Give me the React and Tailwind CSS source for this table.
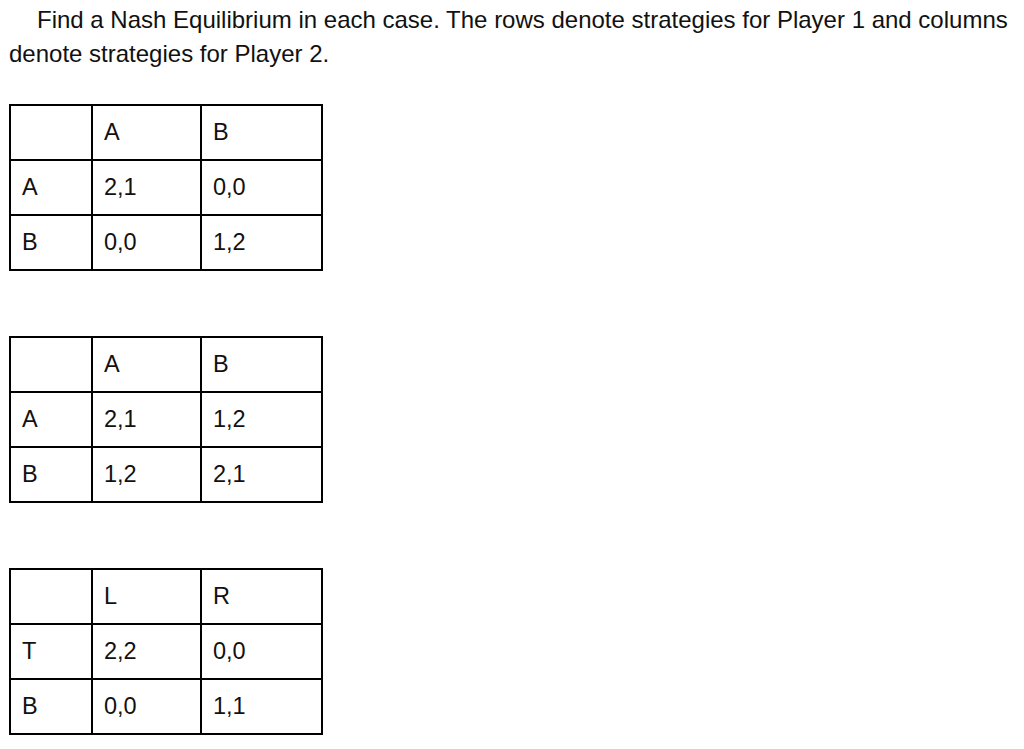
import React from 'react';

const games = [
  { cols: ['A', 'B'], rows: [['A', '2,1', '0,0'], ['B', '0,0', '1,2']] },
  { cols: ['A', 'B'], rows: [['A', '2,1', '1,2'], ['B', '1,2', '2,1']] },
  { cols: ['L', 'R'], rows: [['T', '2,2', '0,0'], ['B', '0,0', '1,1']] },
];

const Cell = ({ children, w }) => (
  <td className={`${w} border-2 border-black px-[11px] align-middle`}>{children}</td>
);

const GameTable = ({ game }) => (
  <table className="border-collapse table-fixed w-[314px] text-[23.5px] leading-none text-[#111]">
    <tbody>
      <tr className="h-[55px]">
        <Cell w="w-[82px]"></Cell>
        <Cell w="w-[109px]">{game.cols[0]}</Cell>
        <Cell w="w-[121px]">{game.cols[1]}</Cell>
      </tr>
      {game.rows.map((row, i) => (
        <tr key={i} className="h-[55px]">
          {row.map((c, j) => (
            <Cell key={j}>{c}</Cell>
          ))}
        </tr>
      ))}
    </tbody>
  </table>
);

export default function App() {
  return (
    <div className="w-[1024px] h-[749px] bg-white font-['Liberation_Sans',Arial,sans-serif] text-[#111] pl-[9px] pt-[3px]">
      <p className="text-[24px] leading-[34px] indent-[28px] pr-1">
        Find a Nash Equilibrium in each case. The rows denote strategies for Player 1 and columns denote strategies for Player 2.
      </p>
      <div className="mt-[33px] flex flex-col gap-[65px]">
        {games.map((g, i) => (
          <GameTable key={i} game={g} />
        ))}
      </div>
    </div>
  );
}
